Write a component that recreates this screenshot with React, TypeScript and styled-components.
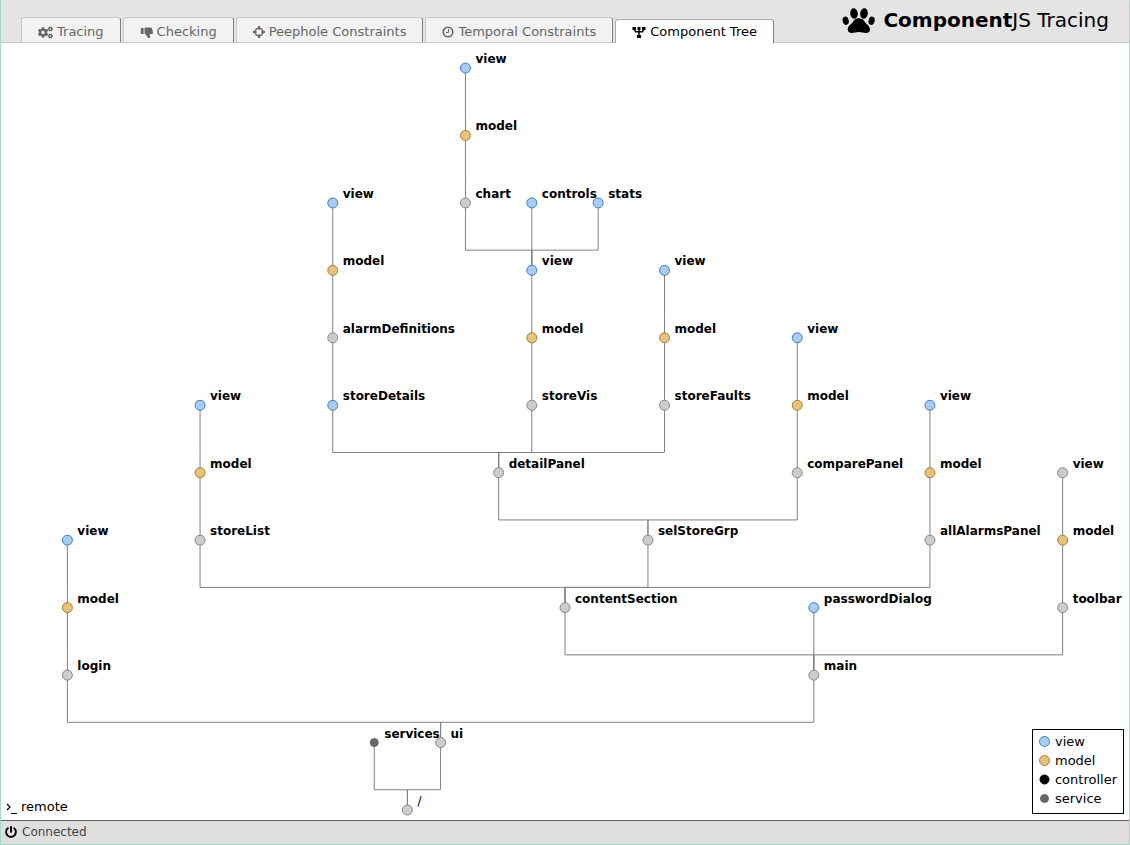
import React from "react";
import styled, { createGlobalStyle } from "styled-components";
import { FaCogs, FaPowerOff } from "react-icons/fa";

const GlobalStyle = createGlobalStyle`
  *, *::before, *::after { box-sizing: border-box; }
  body { margin: 0; }
`;

const Frame = styled.div`
  display: flex;
  flex-direction: column;
  min-height: 100vh;
  border: 1px solid #a3d9c9;
  border-top-color: #e4e4e4;
  background: #fff;
  color: #000;
  font-family: "DejaVu Sans", sans-serif;
  font-size: 13px;
`;

const Header = styled.header`
  display: flex;
  justify-content: space-between;
  height: 42px;
  padding: 0 20px;
  background: #e4e4e4;
  border-bottom: 1px solid #c8c8c8;
`;

const TabList = styled.nav`
  display: flex;
  align-items: flex-end;
  gap: 2px;
`;

const Tab = styled.button<{ $active?: boolean }>`
  display: flex;
  align-items: center;
  gap: 4px;
  height: ${(p) => (p.$active ? 24 : 25)}px;
  margin-bottom: ${(p) => (p.$active ? -1 : 0)}px;
  padding: ${(p) => (p.$active ? "0 16px" : "4px 16px 0")};
  border: 1px solid ${(p) => (p.$active ? "#aaa" : "#c8c8c8")};
  border-right-color: #808080;
  border-bottom: 0;
  border-radius: 3px 3px 0 0;
  background: ${(p) => (p.$active ? "#fff" : "#f2f2f2")};
  color: ${(p) => (p.$active ? "#000" : "#666")};
  font: inherit;
  line-height: 18px;
  white-space: nowrap;

  svg { display: block; flex: none; }
`;

const Brand = styled.h1`
  display: flex;
  align-items: center;
  gap: 8px;
  height: 38px;
  margin: 0;
  font-size: 20px;
  font-weight: 400;
  line-height: 38px;
  white-space: nowrap;
`;

const Main = styled.main`
  position: relative;
  display: flex;
  flex: 1;
  flex-direction: column;
  padding: 25px 0 10px;
`;

const TreeCanvas = styled.svg`
  display: block;
  flex: 1 0 0;
  width: 100%;
  min-height: 0;
  overflow: visible;
`;

const Edge = styled.line`
  stroke: #808080;
  stroke-width: 1px;
`;

const Label = styled.text<{ $root?: boolean }>`
  font-size: 12px;
  font-weight: ${(p) => (p.$root ? 400 : 700)};
`;

const Remote = styled.div`
  position: absolute;
  left: 5px;
  bottom: 3px;
  display: flex;
  align-items: center;
  gap: 3px;
  line-height: 20px;
`;

const Legend = styled.ul`
  position: absolute;
  right: 5px;
  bottom: 6px;
  margin: 0;
  padding: 2px 6px 5px;
  border: 1px solid #000;
  background: #fff;
  list-style: none;
`;

const LegendItem = styled.li`
  display: flex;
  align-items: center;
  gap: 5px;
  line-height: 19px;
`;

const StatusBar = styled.footer`
  display: flex;
  align-items: center;
  gap: 5px;
  height: 24px;
  padding: 0 4px 2px;
  border-top: 1px solid #666;
  background: #dfdfdf;
  color: #444;
  font-size: 12px;

  svg { color: #000; }
`;

type Kind = "view" | "model" | "controller" | "service" | "component";

const kinds: Record<Kind, { fill: string; stroke: string; r: number }> = {
  view: { fill: "#aaccf0", stroke: "#3f7fc4", r: 5 },
  model: { fill: "#e6c27c", stroke: "#a6803c", r: 5 },
  controller: { fill: "#000", stroke: "#000", r: 4.5 },
  service: { fill: "#666", stroke: "#666", r: 4 },
  component: { fill: "#ccc", stroke: "#888", r: 5 },
};

interface TreeNode {
  name: string;
  kind: Kind;
  col: number;
  children?: TreeNode[];
}

const node = (name: string, kind: Kind, col: number, ...children: TreeNode[]): TreeNode => ({
  name,
  kind,
  col,
  children,
});

const mvc = (name: string, col: number, viewKind: Kind = "view") =>
  node(name, "component", col, node("model", "model", col, node("view", viewKind, col)));

const tree = node("/", "component", 6.125,
  node("services", "service", 5.625),
  node("ui", "component", 6.625,
    mvc("login", 1),
    node("main", "component", 12.25,
      node("contentSection", "component", 8.5,
        mvc("storeList", 3),
        node("selStoreGrp", "component", 9.75,
          node("detailPanel", "component", 7.5,
            node("storeDetails", "view", 5, mvc("alarmDefinitions", 5)),
            node("storeVis", "component", 8,
              node("model", "model", 8,
                node("view", "view", 8,
                  mvc("chart", 7),
                  node("controls", "view", 8),
                  node("stats", "view", 9)))),
            mvc("storeFaults", 10)),
          mvc("comparePanel", 12)),
        mvc("allAlarmsPanel", 14)),
      node("passwordDialog", "view", 12.25),
      mvc("toolbar", 16, "component"))));

const COLUMNS = 17;
const LEVELS = 11;
const BEND = 0.7;

const px = (col: number) => `${(col / COLUMNS) * 100}%`;
const py = (depth: number) => `${((LEVELS - depth) / LEVELS) * 100}%`;

const Dot = ({ kind, ...pos }: { kind: Kind; cx: string | number; cy: string | number }) => (
  <circle {...pos} r={kinds[kind].r} fill={kinds[kind].fill} stroke={kinds[kind].stroke} />
);

function Edges({ item, depth }: { item: TreeNode; depth: number }) {
  const bend = py(depth + 1 - BEND);
  return (
    <>
      {item.children?.map((child, i) => (
        <React.Fragment key={i}>
          <Edge x1={px(item.col)} y1={py(depth)} x2={px(item.col)} y2={bend} />
          {child.col !== item.col && <Edge x1={px(item.col)} y1={bend} x2={px(child.col)} y2={bend} />}
          <Edge x1={px(child.col)} y1={bend} x2={px(child.col)} y2={py(depth + 1)} />
          <Edges item={child} depth={depth + 1} />
        </React.Fragment>
      ))}
    </>
  );
}

function Nodes({ item, depth }: { item: TreeNode; depth: number }) {
  return (
    <>
      <Dot kind={item.kind} cx={px(item.col)} cy={py(depth)} />
      <Label x={px(item.col)} y={py(depth)} dx={10} dy={-5} $root={depth === 0}>
        {item.name}
      </Label>
      {item.children?.map((child, i) => (
        <Nodes key={i} item={child} depth={depth + 1} />
      ))}
    </>
  );
}

const ThumbsDownIcon = () => (
  <svg width="13" height="14" viewBox="0 0 13 14" fill="currentColor" aria-hidden="true">
    <path d="M.8 3h2.800v6H.8z" />
    <path d="M4.500 3 6 2.500h4.500q1.300 0 1.600 1.200L13 7.500Q13 9 11.800 9H9.500q.8 1.500.5 3-.3 1.300-1.300 1.300-.9 0-1.100-1.100Q7.300 11 6.300 10.200L4.500 8.500z" />
  </svg>
);

const CrosshairIcon = () => (
  <svg width="12" height="14" viewBox="0 0 12 14" fill="none" stroke="currentColor" aria-hidden="true">
    <circle cx="6" cy="7" r="3.800" strokeWidth="1.600" />
    <path d="M6 1v3.500M6 9.500V13M0 7h3.500M8.500 7H12" strokeWidth="2" />
  </svg>
);

const ClockIcon = () => (
  <svg width="12" height="14" viewBox="0 0 12 14" fill="none" stroke="currentColor" aria-hidden="true">
    <circle cx="6" cy="7" r="4.800" strokeWidth="1.600" />
    <path d="M6.500 4V7.500H4" />
  </svg>
);

const TreeIcon = () => (
  <svg width="14" height="14" viewBox="0 0 14 14" fill="currentColor" aria-hidden="true">
    <path d="M.5 2H4v3H.5zM5.500 2h3v3h-3zM10 2h3.500v3H10zM5 10h4v3H5z" />
    <path d="M2.500 4.500 3.500 6.800h7l1-2.300M7 4v7" fill="none" stroke="currentColor" strokeWidth="1.500" />
  </svg>
);

const PawIcon = () => (
  <svg width="33" height="28" viewBox="0 0 33 28" fill="currentColor" aria-hidden="true">
    <ellipse cx="12" cy="7.500" rx="3.800" ry="5.200" transform="rotate(-8 12 7.500)" />
    <ellipse cx="22" cy="7.500" rx="3.800" ry="5.200" transform="rotate(8 22 7.500)" />
    <ellipse cx="3.700" cy="14.700" rx="3" ry="4.200" transform="rotate(-15 3.700 14.700)" />
    <ellipse cx="29.600" cy="14.700" rx="3" ry="4.200" transform="rotate(15 29.600 14.700)" />
    <path d="M16.800 12.300c3.200 0 4.700 1.500 6.200 4 1.400 2.300 5 3.500 5 7.200 0 2.300-1.700 3.500-3.900 3.500-2.700 0-4.600-1-7.300-1s-4.500 1-7.200 1c-2.200 0-3.900-1.200-3.900-3.500 0-3.700 3.600-4.900 5-7.200 1.500-2.500 2.900-4 6.100-4z" />
  </svg>
);

const PromptIcon = () => (
  <svg width="12" height="14" viewBox="0 0 12 14" fill="none" stroke="currentColor" aria-hidden="true">
    <path d="M1 4 4 7 1 10" strokeWidth="1.200" />
    <path d="M5 13.500h6" />
  </svg>
);

const legend: Kind[] = ["view", "model", "controller", "service"];

export default function App() {
  return (
    <Frame>
      <GlobalStyle />
      <Header>
        <TabList>
          <Tab type="button"><FaCogs size={15} />Tracing</Tab>
          <Tab type="button"><ThumbsDownIcon />Checking</Tab>
          <Tab type="button"><CrosshairIcon />Peephole Constraints</Tab>
          <Tab type="button"><ClockIcon />Temporal Constraints</Tab>
          <Tab type="button" $active><TreeIcon />Component Tree</Tab>
        </TabList>
        <Brand>
          <PawIcon />
          <span><b>Component</b>JS Tracing</span>
        </Brand>
      </Header>
      <Main>
        <TreeCanvas role="img" aria-label="Component tree">
          <Edges item={tree} depth={0} />
          <Nodes item={tree} depth={0} />
        </TreeCanvas>
        <Remote><PromptIcon />remote</Remote>
        <Legend>
          {legend.map((kind) => (
            <LegendItem key={kind}>
              <svg width="11" height="11" viewBox="0 0 11 11" aria-hidden="true">
                <Dot kind={kind} cx={5.5} cy={5.5} />
              </svg>
              {kind}
            </LegendItem>
          ))}
        </Legend>
      </Main>
      <StatusBar><FaPowerOff size={12} />Connected</StatusBar>
    </Frame>
  );
}
